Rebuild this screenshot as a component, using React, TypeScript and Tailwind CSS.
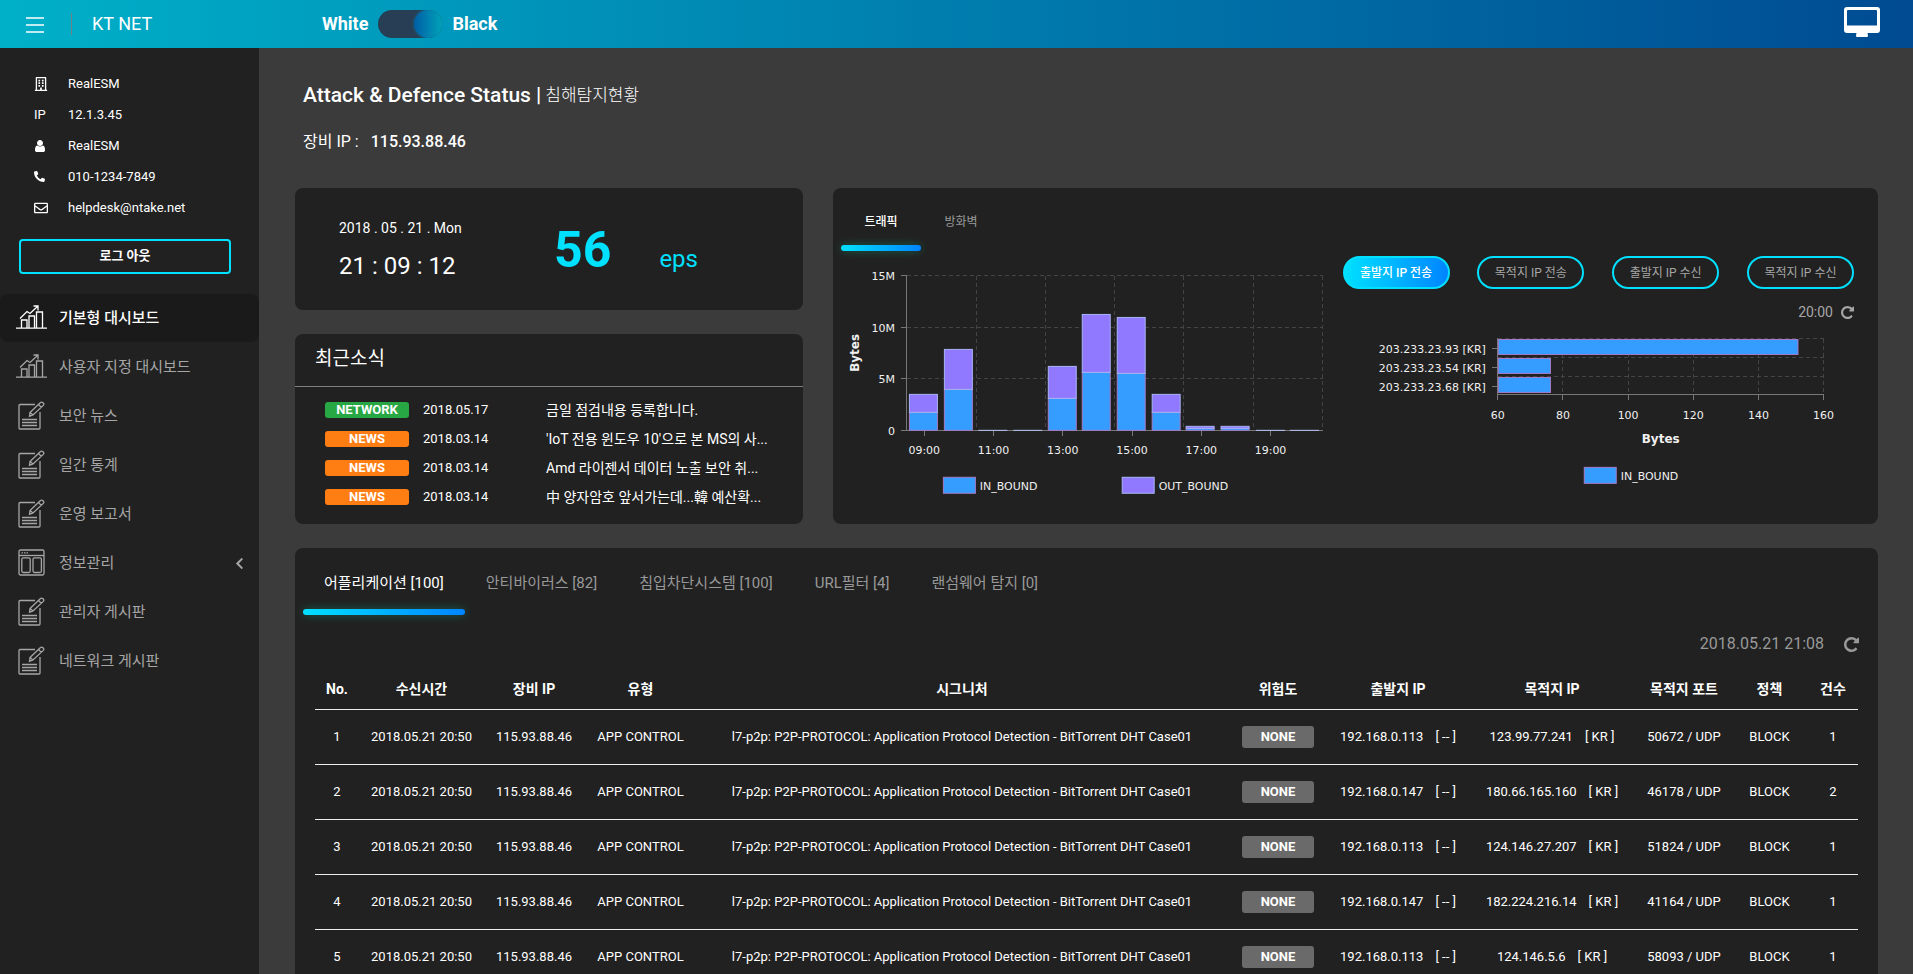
import React, { useState } from 'react';
import { FaRegBuilding, FaPhoneAlt, FaRegEnvelope, FaChevronLeft } from 'react-icons/fa';

const UserIcon = () => (
  <svg viewBox="128 0 1536 1792" className="h-[14px] w-3" fill="currentColor" aria-hidden="true">
    <path d="M1536 1399q0 109-62.5 187t-150.5 78h-854q-88 0-150.5-78t-62.5-187q0-85 8.5-160.5t31.5-152 58.5-131 94-89 134.5-34.5q131 128 313 128t313-128q76 0 134.5 34.5t94 89 58.5 131 31.5 152 8.5 160.5zm-256-887q0 159-112.5 271.5t-271.5 112.5-271.5-112.5-112.5-271.5 112.5-271.5 271.5-112.5 271.5 112.5 112.5 271.5z" />
  </svg>
);

const RefreshIcon = ({ className }: { className: string }) => (
  <svg viewBox="128 128 1536 1536" className={className} fill="currentColor" aria-hidden="true">
    <path d="M1664 256v448q0 26-19 45t-45 19h-448q-42 0-59-40-17-39 14-69l138-138q-148-137-349-137-104 0-198.5 40.5t-163.5 109.5-109.5 163.5-40.5 198.5 40.5 198.5 109.5 163.5 163.5 109.5 198.5 40.5q119 0 225-52t179-147q7-10 23-12 15 0 25 9l137 138q9 8 9.5 20.5t-7.5 22.5q-109 132-264 204.5t-327 72.5q-156 0-298-61t-245-164-164-245-61-298 61-298 164-245 245-164 298-61q147 0 284.5 55.5t244.5 156.5l130-129q29-31 70-14 39 17 39 59z" />
  </svg>
);

const MonitorIcon = () => (
  <svg viewBox="0 0 36 30" className="h-[30px] w-9" aria-hidden="true">
    <path
      fill="#fff"
      fillRule="evenodd"
      d="M3 0h30a3 3 0 0 1 3 3v20a3 3 0 0 1-3 3h-9.500l.5 2.500q0 1.500-1 1.500H13q-1 0-1-1.500l.5-2.500H3a3 3 0 0 1-3-3V3a3 3 0 0 1 3-3zM4 3a1 1 0 0 0-1 1v14.500h30V4a1 1 0 0 0-1-1z"
    />
  </svg>
);

const ChartIcon = () => (
  <svg viewBox="0 0 31 24" className="h-6 w-[31px]" fill="none" stroke="currentColor" strokeWidth="1.300" aria-hidden="true">
    <path d="M0 23.200h31M5.500 23v-8h5.500v8M13 23V11h5.500v12M20.500 23V7h6v16" />
    <path d="M4 13.500 11 6.500l3 2L21.500 1.500M17.500 1h4.500v4.500" />
  </svg>
);

const DocIcon = () => (
  <svg viewBox="0 0 27 29" className="h-[29px] w-[27px]" fill="none" stroke="currentColor" strokeWidth="1.300" aria-hidden="true">
    <path d="M17 3.500H2A1 1 0 0 0 1 4.500V27a1 1 0 0 0 1 1h19a1 1 0 0 0 1-1V11" />
    <path d="M12 11.500 22.500 1.500q1-1 2.500.3t.3 2.600L15 14l-3.500 1.200zM20.500 3.500l2.800 2.900M12 11.500l3 2.500" />
    <path d="M4 18.500h15M4 21.500h15M4 24.500h15" />
  </svg>
);

const WindowIcon = () => (
  <svg viewBox="0 0 27 27" className="size-[27px]" fill="none" stroke="currentColor" strokeWidth="1.300" aria-hidden="true">
    <rect x="1" y="1" width="25" height="25" rx="1.500" />
    <path d="M1 6.500h25" />
    <path d="M3.500 3.800h7" strokeDasharray="1.500 1" />
    <rect x="3.800" y="8.800" width="8.400" height="14.700" rx="1.500" />
    <rect x="15" y="8.800" width="8.400" height="14.700" rx="1.500" />
  </svg>
);

const profile = [
  { icon: <FaRegBuilding className="size-[14px]" />, text: 'RealESM' },
  { icon: <span>IP</span>, text: '12.1.3.45' },
  { icon: <UserIcon />, text: 'RealESM' },
  { icon: <FaPhoneAlt className="size-[11px]" />, text: '010-1234-7849' },
  { icon: <FaRegEnvelope className="size-[14px]" />, text: 'helpdesk@ntake.net' },
];

const menu = [
  { icon: <ChartIcon />, text: '기본형 대시보드', active: true },
  { icon: <ChartIcon />, text: '사용자 지정 대시보드' },
  { icon: <DocIcon />, text: '보안 뉴스' },
  { icon: <DocIcon />, text: '일간 통계' },
  { icon: <DocIcon />, text: '운영 보고서' },
  { icon: <WindowIcon />, text: '정보관리', more: true },
  { icon: <DocIcon />, text: '관리자 게시판' },
  { icon: <DocIcon />, text: '네트워크 게시판' },
];

const news = [
  { tag: 'NETWORK', date: '2018.05.17', title: '금일 점검내용 등록합니다.' },
  { tag: 'NEWS', date: '2018.03.14', title: "'IoT 전용 윈도우 10'으로 본 MS의 사..." },
  { tag: 'NEWS', date: '2018.03.14', title: 'Amd 라이젠서 데이터 노출 보안 취...' },
  { tag: 'NEWS', date: '2018.03.14', title: '中 양자암호 앞서가는데...韓 예산확...' },
];

const traffic = [
  [1.75, 1.75], [3.95, 3.9], [0, 0], [0, 0], [3.1, 3.1], [5.6, 5.65],
  [5.5, 5.45], [1.75, 1.75], [0.2, 0.2], [0.2, 0.2], [0, 0], [0, 0],
];

function TrafficChart() {
  const x0 = 74;
  const y0 = 172;
  const step = 416 / 12;
  const h = (v: number) => Math.round((v * 155) / 15);
  return (
    <svg viewBox="0 0 502 250" className="w-full" role="img" aria-label="Traffic" fontFamily="'DejaVu Sans', sans-serif" fontSize="11" fill="#f0f0f0">
      <g stroke="#444" strokeDasharray="4 3" shapeRendering="crispEdges">
        {[17, 69, 120].map((y) => <line key={y} x1={x0} x2={490} y1={y} y2={y} />)}
        {[2, 4, 6, 8, 10, 12].map((i) => <line key={i} x1={x0 + i * step} x2={x0 + i * step} y1={17} y2={y0} />)}
      </g>
      <g stroke="#777" shapeRendering="crispEdges">
        <line x1={x0} x2={x0} y1={17} y2={y0} />
        <line x1={x0} x2={490} y1={y0} y2={y0} />
        {[17, 69, 120, 172].map((y) => <line key={y} x1={68} x2={x0} y1={y} y2={y} />)}
        {[0, 2, 4, 6, 8, 10].map((i) => <line key={i} x1={x0 + (i + 0.5) * step} x2={x0 + (i + 0.5) * step} y1={y0} y2={y0 + 5} />)}
      </g>
      {traffic.map(([a, b], i) => {
        const x = Math.round(x0 + i * step + 3) + 0.5;
        if (a + b === 0) return <line key={i} x1={x - 1} x2={x + 28} y1={y0 - 0.5} y2={y0 - 0.5} stroke="#b9c4f5" />;
        return (
          <g key={i}>
            <rect x={x - 1} y={y0 - h(a) - 0.5} width={28} height={h(a)} fill="#359dff" stroke="#a67cc8" />
            <rect x={x - 1} y={y0 - h(a + b) - 0.5} width={28} height={h(a + b) - h(a)} fill="#9179ff" stroke="#a9b4f5" />
          </g>
        );
      })}
      <g textAnchor="end">
        <text x="62" y="21">15M</text>
        <text x="62" y="73">10M</text>
        <text x="62" y="124">5M</text>
        <text x="62" y="176">0</text>
      </g>
      <g textAnchor="middle">
        {['09:00', '11:00', '13:00', '15:00', '17:00', '19:00'].map((t, i) => (
          <text key={t} x={x0 + (i * 2 + 0.5) * step} y="195">{t}</text>
        ))}
      </g>
      <text transform="translate(26 94) rotate(-90)" textAnchor="middle" fontSize="12" fontWeight="bold">Bytes</text>
      <rect x="110.500" y="218.500" width="32" height="16" fill="#359dff" stroke="#a67cc8" />
      <text x="147" y="231">IN_BOUND</text>
      <rect x="289.500" y="218.500" width="32" height="16" fill="#9179ff" stroke="#a9b4f5" />
      <text x="326" y="231">OUT_BOUND</text>
    </svg>
  );
}

const sources = [
  { name: '203.233.23.93 [KR]', value: 152 },
  { name: '203.233.23.54 [KR]', value: 76 },
  { name: '203.233.23.68 [KR]', value: 76 },
];

function SourceChart() {
  const x0 = 155;
  const unit = 326 / 100;
  return (
    <svg viewBox="0 0 512 160" className="w-full" role="img" aria-label="Source" fontFamily="'DejaVu Sans', sans-serif" fontSize="11" fill="#f0f0f0">
      <g stroke="#444" strokeDasharray="4 3" shapeRendering="crispEdges">
        {[8, 27, 46].map((y) => <line key={y} x1={x0} x2={x0 + 326} y1={y} y2={y} />)}
        {[20, 40, 60, 80, 100].map((v) => <line key={v} x1={x0 + v * unit} x2={x0 + v * unit} y1={8} y2={64} />)}
      </g>
      <g stroke="#777" shapeRendering="crispEdges">
        <line x1={x0} x2={x0} y1={7} y2={64} />
        <line x1={x0} x2={x0 + 326} y1={64} y2={64} />
        {[0, 20, 40, 60, 80, 100].map((v) => <line key={v} x1={x0 + v * unit} x2={x0 + v * unit} y1={64} y2={69} />)}
        {[18, 37, 56].map((y) => <line key={y} x1={x0 - 6} x2={x0} y1={y} y2={y} />)}
      </g>
      {sources.map((s, i) => (
        <g key={s.name}>
          <rect x={x0 + 0.5} y={8.5 + i * 19} width={(s.value - 60) * unit} height={15} fill="#359dff" stroke="#a67cc8" />
          <text x="143" y={22 + i * 19} textAnchor="end">{s.name}</text>
        </g>
      ))}
      <g textAnchor="middle">
        {[60, 80, 100, 120, 140, 160].map((v) => <text key={v} x={x0 + (v - 60) * unit} y="88">{v}</text>)}
        <text x="318" y="112" fontSize="12" fontWeight="bold">Bytes</text>
      </g>
      <rect x="241.500" y="136.500" width="32" height="16" fill="#359dff" stroke="#a67cc8" />
      <text x="278" y="149">IN_BOUND</text>
    </svg>
  );
}

const ranges = ['출발지 IP 전송', '목적지 IP 전송', '출발지 IP 수신', '목적지 IP 수신'];
const tabs = ['어플리케이션 [100]', '안티바이러스 [82]', '침입차단시스템 [100]', 'URL필터 [4]', '랜섬웨어 탐지 [0]'];

const columns = [
  { name: 'No.', width: 'w-11' },
  { name: '수신시간', width: 'w-[125px]' },
  { name: '장비 IP', width: 'w-[100px]' },
  { name: '유형', width: 'w-[113px]' },
  { name: '시그니처', width: '' },
  { name: '위험도', width: 'w-[102px]' },
  { name: '출발지 IP', width: 'w-[138px]' },
  { name: '목적지 IP', width: 'w-[170px]' },
  { name: '목적지 포트', width: 'w-[94px]' },
  { name: '정책', width: 'w-[77px]' },
  { name: '건수', width: 'w-[50px]' },
];

const events = [
  { src: '192.168.0.113', dst: '123.99.77.241', port: '50672 / UDP', count: 1 },
  { src: '192.168.0.147', dst: '180.66.165.160', port: '46178 / UDP', count: 2 },
  { src: '192.168.0.113', dst: '124.146.27.207', port: '51824 / UDP', count: 1 },
  { src: '192.168.0.147', dst: '182.224.216.14', port: '41164 / UDP', count: 1 },
  { src: '192.168.0.113', dst: '124.146.5.6', port: '58093 / UDP', count: 1 },
];

const Underline = () => (
  <span className="h-1.5 w-full rounded-full bg-linear-to-r from-[#00e0ff] to-[#0084ff] shadow-[0_0_10px_rgba(0,255,190,0.3)]" />
);

export default function App() {
  const [dark, setDark] = useState(true);
  return (
    <div className="flex h-screen flex-col bg-[#3b3b3b] font-[Roboto,'Noto_Sans_CJK_KR',sans-serif] text-[13px] text-white">
      <header className="flex h-12 shrink-0 items-center bg-linear-to-r from-[#00b0c8] to-[#004b92] pr-[33px] pl-[26px]">
        <button type="button" aria-label="Menu" className="flex w-[18px] flex-col gap-[5px] pt-0.5">
          <span className="h-0.5 bg-white/75" />
          <span className="h-0.5 bg-white/75" />
          <span className="h-0.5 bg-white/75" />
        </button>
        <span className="mr-5 ml-[27px] h-[22px] w-px bg-[#6c8088]" />
        <div className="w-[230px] text-lg">KT NET</div>
        <div className="flex flex-1 items-center gap-2.5 text-lg font-bold">
          <span>White</span>
          <label className="flex h-7 w-16 cursor-pointer items-center justify-start rounded-full bg-[#283e55] has-checked:justify-end">
            <input
              type="checkbox"
              aria-label="Black theme"
              checked={dark}
              onChange={(e) => setDark(e.target.checked)}
              className="size-7 appearance-none rounded-full bg-linear-to-r from-[#005ea5] to-[#00a2b9] shadow-[0_0_3px_rgba(0,150,180,0.6)]"
            />
          </label>
          <span>Black</span>
        </div>
        <button type="button" aria-label="Monitor" className="pb-1"><MonitorIcon /></button>
      </header>

      <div className="flex min-h-0 flex-1">
        <aside className="w-[259px] shrink-0 overflow-hidden bg-[#212121] pt-5">
          <ul>
            {profile.map((p, i) => (
              <li key={i} className="flex h-[31px] items-center pl-[34px]">
                <span className="w-[34px]">{p.icon}</span>
                {p.text}
              </li>
            ))}
          </ul>
          <div className="px-[19px] pt-4 pr-7">
            <button type="button" className="h-[35px] w-full rounded border-2 border-[#00e0ff] pb-0.5 font-bold">로그 아웃</button>
          </div>
          <nav className="mt-5 flex flex-col gap-px">
            {menu.map((m) => (
              <a
                key={m.text}
                href="#"
                className={m.active
                  ? 'flex h-12 items-center rounded-lg bg-[#1a1a1a] pr-[13px] pl-4 text-[15px] font-medium text-white'
                  : 'flex h-12 items-center rounded-lg pr-[13px] pl-4 text-[15px] text-[#a6a6a6]'}
              >
                <span className="flex w-[31px] justify-center pb-0.5">{m.icon}</span>
                <span className="ml-3 flex-1">{m.text}</span>
                {m.more && <FaChevronLeft className="size-[13px]" />}
              </a>
            ))}
          </nav>
        </aside>

        <main className="min-w-0 flex-1 overflow-y-auto pr-[35px] pl-9 [scrollbar-width:none]">
          <div className="flex h-[140px] flex-col gap-5 pt-8 pl-2">
            <h1 className="flex items-center gap-1 text-[21px] leading-[30px] font-medium">
              Attack &amp; Defence Status |<span className="text-[17px] font-light">침해탐지현황</span>
            </h1>
            <p className="flex items-center gap-3 text-base leading-6">
              <span>장비 IP :</span>
              <span className="font-medium">115.93.88.46</span>
            </p>
          </div>

          <div className="grid grid-cols-[minmax(0,508fr)_minmax(0,1045fr)] gap-[30px]">
            <div className="flex flex-col gap-6">
              <section className="flex h-[122px] rounded-lg bg-[#212121] pl-11">
                <div className="w-[215px] pt-7">
                  <div className="text-sm leading-6">2018 . 05 . 21 . Mon</div>
                  <div className="mt-2 text-2xl leading-9">21 : 09 : 12</div>
                </div>
                <div className="flex items-baseline gap-12 pt-6 text-[#00e0ff]">
                  <span className="text-[50px] leading-[76px] font-bold">56</span>
                  <span className="text-2xl">eps</span>
                </div>
              </section>
              <section className="flex-1 rounded-lg bg-[#212121]">
                <h2 className="h-[53px] border-b border-[#808080] pl-5 text-[19px] leading-[50px]">최근소식</h2>
                <ul className="px-[30px] pt-2">
                  {news.map((n, i) => (
                    <li key={i} className="flex h-[29px] items-center">
                      <span className={n.tag === 'NEWS'
                        ? 'w-[84px] rounded-[3px] bg-[#ff7e14] text-center leading-4 font-bold'
                        : 'w-[84px] rounded-[3px] bg-[#28a745] text-center leading-4 font-bold'}
                      >
                        {n.tag}
                      </span>
                      <span className="w-[137px] pl-3.5">{n.date}</span>
                      <a href="#" className="text-sm whitespace-nowrap">{n.title}</a>
                    </li>
                  ))}
                </ul>
              </section>
            </div>

            <section className="flex min-h-[336px] flex-col rounded-lg bg-[#212121]">
              <div className="flex pl-2 text-xs">
                <button type="button" className="flex h-[63px] w-20 flex-col items-center justify-between pt-[26px] font-medium">
                  트래픽
                  <Underline />
                </button>
                <button type="button" className="flex h-[63px] w-20 flex-col items-center pt-[26px] text-[#999]">방화벽</button>
              </div>
              <div className="flex items-start gap-2 pr-6">
                <div className="w-[502px] flex-auto pt-2"><TrafficChart /></div>
                <div className="w-[512px] flex-auto pt-[5px]">
                  <div className="flex justify-between">
                    {ranges.map((r, i) => (
                      <button
                        key={r}
                        type="button"
                        className={i === 0
                          ? 'h-[33px] w-[107px] rounded-full border-2 border-[#00e0ff] bg-linear-to-r from-[#00e0ff] to-[#0084ff] text-xs font-medium'
                          : 'h-[33px] w-[107px] rounded-full border-2 border-[#00e0ff] text-xs text-[#a6a6a6]'}
                      >
                        {r}
                      </button>
                    ))}
                  </div>
                  <div className="flex h-[42px] items-center justify-end gap-2 pt-1 text-sm text-[#a6a6a6]">
                    20:00
                    <button type="button" aria-label="Refresh"><RefreshIcon className="size-[13px]" /></button>
                  </div>
                  <SourceChart />
                </div>
              </div>
            </section>
          </div>

          <section className="mt-6 rounded-t-lg bg-[#212121] pb-6">
            <div className="flex pl-2 text-[15px]">
              {tabs.map((t, i) => (
                <button
                  key={t}
                  type="button"
                  className={i === 0
                    ? 'flex h-[67px] flex-col justify-between pt-6'
                    : 'flex h-[67px] flex-col pt-6 text-[#999]'}
                >
                  <span className="px-[21px]">{t}</span>
                  {i === 0 && <Underline />}
                </button>
              ))}
            </div>
            <div className="flex h-[58px] items-center justify-end gap-5 pr-[19px] text-base text-[#999]">
              2018.05.21 21:08
              <button type="button" aria-label="Refresh"><RefreshIcon className="size-[15px]" /></button>
            </div>
            <div className="pr-5 pl-5">
              <table className="w-full table-fixed text-center">
                <thead>
                  <tr className="h-9 border-b border-[#eee] text-sm leading-5">
                    {columns.map((c) => <th key={c.name} scope="col" className={`pb-1 ${c.width}`}>{c.name}</th>)}
                  </tr>
                </thead>
                <tbody>
                  {events.map((e, i) => (
                    <tr key={i} className="h-[55px] border-b border-[#eee]">
                      <td>{i + 1}</td>
                      <td>2018.05.21 20:50</td>
                      <td>115.93.88.46</td>
                      <td>APP CONTROL</td>
                      <td>l7-p2p: P2P-PROTOCOL: Application Protocol Detection - BitTorrent DHT Case01</td>
                      <td><span className="inline-block w-[72px] rounded-[3px] bg-[#6a6a6a] leading-[22px] font-bold">NONE</span></td>
                      <td>{e.src}<span className="ml-3">[ -- ]</span></td>
                      <td>{e.dst}<span className="ml-3">[ KR ]</span></td>
                      <td>{e.port}</td>
                      <td>BLOCK</td>
                      <td>{e.count}</td>
                    </tr>
                  ))}
                </tbody>
              </table>
            </div>
          </section>
        </main>
      </div>
    </div>
  );
}
